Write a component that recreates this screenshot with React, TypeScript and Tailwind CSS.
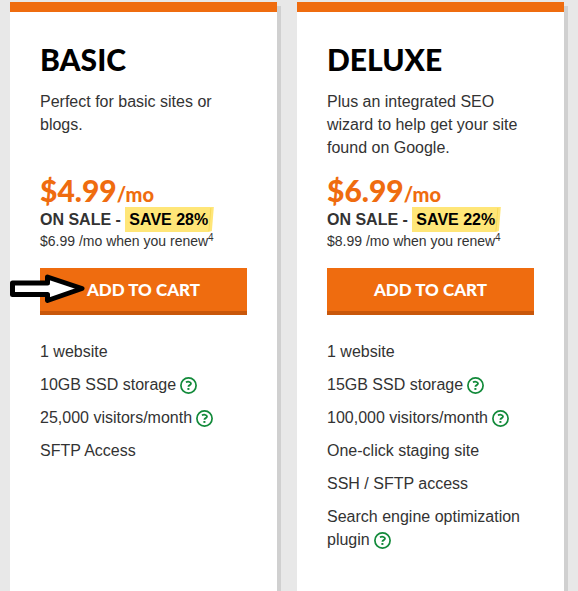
type Feature = { text: string; help?: boolean };

type Plan = {
  name: string;
  description: string;
  price: string;
  save: string;
  renewal: string;
  features: Feature[];
  highlighted?: boolean;
};

const plans: Plan[] = [
  {
    name: "BASIC",
    description: "Perfect for basic sites or blogs.",
    price: "$4.99",
    save: "SAVE 28%",
    renewal: "$6.99 /mo when you renew",
    highlighted: true,
    features: [
      { text: "1 website" },
      { text: "10GB SSD storage", help: true },
      { text: "25,000 visitors/month", help: true },
      { text: "SFTP Access" },
    ],
  },
  {
    name: "DELUXE",
    description: "Plus an integrated SEO wizard to help get your site found on Google.",
    price: "$6.99",
    save: "SAVE 22%",
    renewal: "$8.99 /mo when you renew",
    features: [
      { text: "1 website" },
      { text: "15GB SSD storage", help: true },
      { text: "100,000 visitors/month", help: true },
      { text: "One-click staging site" },
      { text: "SSH / SFTP access" },
      { text: "Search engine optimization plugin", help: true },
    ],
  },
];

function HelpIcon() {
  return (
    <svg viewBox="0 0 17 17" className="ml-1 inline-block size-[17px] align-[-4px]" fill="none" role="img" aria-label="Help">
      <circle cx="8.5" cy="8.5" r="7.6" stroke="#128a3a" strokeWidth="1.7" />
      <path d="M5.9 5.2C7.6 4.4 11 4.4 11 6.6C11 8.3 8.4 8 8.4 9.8" stroke="#128a3a" strokeWidth="1.8" />
      <path d="M7.4 11h2v1.9h-2z" fill="#128a3a" />
    </svg>
  );
}

function PointerArrow() {
  return (
    <svg viewBox="0 0 75 30" className="absolute top-[6px] -left-[30px] h-[30px] w-[75px]" aria-hidden="true">
      <path d="M2.5 9H37.5V3L72 14.5L37.5 26.5V20.5H2.5Z" fill="#fff" stroke="#000" strokeWidth="5" strokeLinejoin="round" />
    </svg>
  );
}

function PlanCard({ plan }: { plan: Plan }) {
  return (
    <section className="border-t-10 border-[#ef6c0f] bg-white px-[30px] pt-[27px] shadow-[4px_4px_0_#d0d0d0]">
      <h2 className="font-['Lato',sans-serif] text-3xl leading-10 font-black text-black">{plan.name}</h2>
      <p className="mt-[11px] min-h-[69px] leading-[23px]">{plan.description}</p>
      <p className="mt-[15px] font-['Lato',sans-serif] text-3xl leading-8 font-black text-[#ef6c0f]">
        {plan.price}
        <span className="text-xl">/mo</span>
      </p>
      <p className="flex h-[22px] items-center leading-[23px] font-bold whitespace-pre">
        ON SALE -{" "}
        <mark className="relative h-[25px] bg-transparent pr-[6px] pl-1 leading-[25px] text-black">
          <svg viewBox="0 0 89 25" preserveAspectRatio="none" className="absolute inset-0 size-full" aria-hidden="true">
            <path d="M0 0H89L87 24L84 25H0Z" fill="#ffe678" />
            <path d="M86 1L84 24" stroke="#f7d957" />
          </svg>
          <span className="relative">{plan.save}</span>
        </mark>
      </p>
      <p className="text-sm leading-[22px]">
        {plan.renewal}
        <sup className="-top-[5px] text-[10px] leading-none">4</sup>
      </p>
      <div className="relative mt-4">
        <button type="button" className="h-[47px] w-full border-b-4 border-[#c9570a] bg-[#ef6c0f] font-['Lato',sans-serif] text-[17px] font-black text-white">
          ADD TO CART
        </button>
        {plan.highlighted && <PointerArrow />}
      </div>
      <ul className="mt-[25px] flex flex-col gap-[10px] leading-[23px]">
        {plan.features.map(({ text, help }) => (
          <li key={text}>
            {text}
            {help && <HelpIcon />}
          </li>
        ))}
      </ul>
    </section>
  );
}

export default function App() {
  return (
    <main className="grid min-h-screen grid-cols-2 gap-5 bg-[#e8e8e8] pt-[2px] pr-[14px] pl-[10px] font-['Liberation_Sans',Arial,sans-serif] text-base text-[#333]">
      {plans.map((plan) => (
        <PlanCard key={plan.name} plan={plan} />
      ))}
    </main>
  );
}
